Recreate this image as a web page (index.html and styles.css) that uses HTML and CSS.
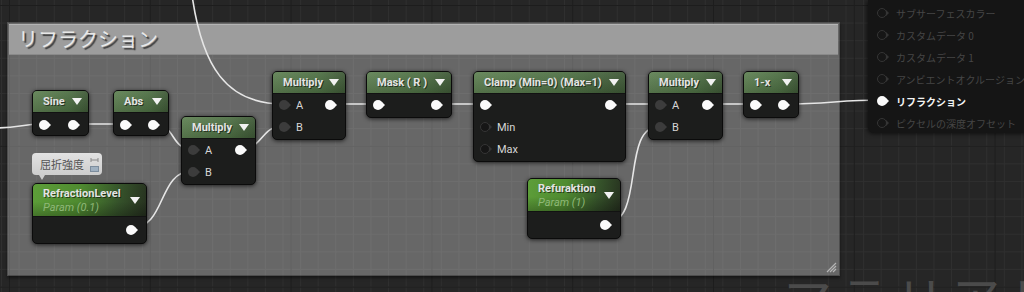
FILE: index.html
```html
<!DOCTYPE html>
<html lang="ja">
<head>
  <meta charset="UTF-8" />
  <title>Material Graph - Refraction</title>
  <link rel="stylesheet" href="styles.css">
</head>
<body>
  <div class="graph">
    <!-- comment box -->
    <div class="comment">
      <div class="comment-head">リフラクション</div>
      <svg class="comment-grip" width="12" height="12" viewBox="0 0 12 12">
        <path d="M11 2 L2 11 M11 5 L5 11 M11 8 L8 11" stroke="#b5b5b5" stroke-width="1.2" />
      </svg>
    </div>

    <!-- wires -->
    <svg class="wires" width="1024" height="292" viewBox="0 0 1024 292">
      <g fill="none" stroke="#e6e6e6" stroke-width="1.6">
        <path d="M-5,128 C20,128 20,124 43,124" />
        <path d="M75,124 L124,124" />
        <path d="M154,124 C176,124 170,149 192,149" />
        <path d="M132,228 C166,228 158,171 192,171" />
        <path d="M241,149 C263,149 261,126 283,126" />
        <path d="M192,-5 C202,66 226,104 283,104" />
        <path d="M332,104 L377,104" />
        <path d="M437,104 L485,104" />
        <path d="M611,104 L660,104" />
        <path d="M606,223 C646,223 620,126 660,126" />
        <path d="M709,104 L754,104" />
        <path d="M784,104 C830,104 838,100 882,100" />
      </g>
    </svg>

    <!-- Sine -->
    <div class="node n-sine">
      <div class="node-head"><span class="node-title">Sine</span><span class="caret"></span></div>
      <div class="node-body">
        <div class="row"><span class="pin on"></span><span class="pin on push"></span></div>
      </div>
    </div>

    <!-- Abs -->
    <div class="node n-abs">
      <div class="node-head"><span class="node-title">Abs</span><span class="caret"></span></div>
      <div class="node-body">
        <div class="row"><span class="pin on"></span><span class="pin on push"></span></div>
      </div>
    </div>

    <!-- Multiply (inner) -->
    <div class="node n-mul1">
      <div class="node-head"><span class="node-title">Multiply</span><span class="caret"></span></div>
      <div class="node-body">
        <div class="row"><span class="pin dim"></span><span class="label">A</span><span class="pin on push"></span></div>
        <div class="row"><span class="pin dim"></span><span class="label">B</span></div>
      </div>
    </div>

    <!-- Multiply (top) -->
    <div class="node n-mul2">
      <div class="node-head"><span class="node-title">Multiply</span><span class="caret"></span></div>
      <div class="node-body">
        <div class="row"><span class="pin dim"></span><span class="label">A</span><span class="pin on push"></span></div>
        <div class="row"><span class="pin dim"></span><span class="label">B</span></div>
      </div>
    </div>

    <!-- Mask -->
    <div class="node n-mask">
      <div class="node-head"><span class="node-title">Mask ( R )</span><span class="caret"></span></div>
      <div class="node-body">
        <div class="row"><span class="pin on"></span><span class="pin on push"></span></div>
      </div>
    </div>

    <!-- Clamp -->
    <div class="node n-clamp">
      <div class="node-head"><span class="node-title">Clamp (Min=0) (Max=1)</span><span class="caret"></span></div>
      <div class="node-body">
        <div class="row"><span class="pin on"></span><span class="pin on push"></span></div>
        <div class="row"><span class="pin hollow"></span><span class="label">Min</span></div>
        <div class="row"><span class="pin hollow"></span><span class="label">Max</span></div>
      </div>
    </div>

    <!-- Multiply (right) -->
    <div class="node n-mul3">
      <div class="node-head"><span class="node-title">Multiply</span><span class="caret"></span></div>
      <div class="node-body">
        <div class="row"><span class="pin dim"></span><span class="label">A</span><span class="pin on push"></span></div>
        <div class="row"><span class="pin dim"></span><span class="label">B</span></div>
      </div>
    </div>

    <!-- 1-x -->
    <div class="node n-onex">
      <div class="node-head"><span class="node-title">1-x</span><span class="caret"></span></div>
      <div class="node-body">
        <div class="row"><span class="pin on"></span><span class="pin on push"></span></div>
      </div>
    </div>

    <!-- comment bubble -->
    <div class="bubble">
      <span class="bubble-text">屈折強度</span>
      <span class="bubble-icons">
        <svg width="9" height="6" viewBox="0 0 9 6"><path d="M1 1 V5 M8 1 V5 M1 3 H8" stroke="#8a8a8a" stroke-width="1" fill="none" /></svg>
        <svg width="9" height="6" viewBox="0 0 9 6"><rect x="0.5" y="0.5" width="8" height="5" fill="#9fb0c0" stroke="#7d8d9d" stroke-width="1" /></svg>
      </span>
    </div>

    <!-- RefractionLevel param -->
    <div class="node param n-reflevel">
      <div class="node-head">
        <div class="param-text">
          <span class="node-title">RefractionLevel</span>
          <span class="param-sub">Param (0.1)</span>
        </div>
        <span class="caret"></span>
      </div>
      <div class="node-body">
        <div class="row tall"><span class="pin on push"></span></div>
      </div>
    </div>

    <!-- Refuraktion param -->
    <div class="node param n-refur">
      <div class="node-head">
        <div class="param-text">
          <span class="node-title">Refuraktion</span>
          <span class="param-sub">Param (1)</span>
        </div>
        <span class="caret"></span>
      </div>
      <div class="node-body">
        <div class="row tall"><span class="pin on push"></span></div>
      </div>
    </div>

    <!-- material result pins -->
    <div class="result">
      <div class="result-row"><span class="pin hollow"></span><span>サブサーフェスカラー</span></div>
      <div class="result-row"><span class="pin hollow"></span><span>カスタムデータ 0</span></div>
      <div class="result-row"><span class="pin hollow"></span><span>カスタムデータ 1</span></div>
      <div class="result-row"><span class="pin hollow"></span><span>アンビエントオクルージョン</span></div>
      <div class="result-row active"><span class="pin on"></span><span>リフラクション</span></div>
      <div class="result-row"><span class="pin hollow"></span><span>ピクセルの深度オフセット</span></div>
    </div>

    <div class="watermark">マテリアル</div>
  </div>
</body>
</html>
```

FILE: styles.css
```css
:root {
  --canvas: #262626;
  --grid: #2f2f2f;
  --grid-major: #1d1d1d;
  --node-body: #1c1d1c;
  --wire: #e6e6e6;
  --pin-dim: #3c3c3c;
  --text: #e4e4e4;
}

* {
  box-sizing: border-box;
  margin: 0;
  padding: 0;
}

body {
  font-family: Roboto, "Noto Sans CJK JP", sans-serif;
  background: var(--canvas);
  overflow: hidden;
}

/* canvas with grid */
.graph {
  position: relative;
  width: 1024px;
  height: 292px;
  overflow: hidden;
  background-color: var(--canvas);
  background-image:
    linear-gradient(to right, var(--grid-major) 1px, transparent 1px),
    linear-gradient(to bottom, var(--grid-major) 1px, transparent 1px),
    linear-gradient(to right, var(--grid) 1px, transparent 1px),
    linear-gradient(to bottom, var(--grid) 1px, transparent 1px);
  background-size: 140.8px 140.8px, 140.8px 140.8px, 17.6px 17.6px, 17.6px 17.6px;
  background-position: 9px 5px, 9px 5px, 1px 5px, 1px 5px;
}

/* comment box */
.comment {
  position: absolute;
  left: 7px;
  top: 22px;
  width: 833px;
  height: 254px;
  background: rgba(255, 255, 255, 0.3);
  border: 1px solid rgba(0, 0, 0, 0.25);
  box-shadow: 0 2px 3px rgba(0, 0, 0, 0.45);
  z-index: 0;
}

.comment-head {
  margin: 1px 1px 0;
  height: 31px;
  background: #9d9d9d;
  border-top: 1px solid #b4b4b4;
  border-bottom: 1px solid #8a8a8a;
  font-family: "Noto Sans CJK JP", sans-serif;
  font-size: 20px;
  line-height: 28px;
  padding-left: 9px;
  color: #e8e8e8;
  text-shadow: 2px 2px 1px #3c3c3c;
}

.comment-grip {
  position: absolute;
  right: 2px;
  bottom: 2px;
}

.wires {
  position: absolute;
  left: 0;
  top: 0;
  z-index: 1;
}

/* nodes */
.node {
  position: absolute;
  z-index: 2;
  background: var(--node-body);
  border: 1px solid #0b0b0b;
  border-radius: 5px;
  box-shadow: 0 1px 4px rgba(0, 0, 0, 0.7);
  overflow: visible;
}

.node-head {
  height: 22px;
  display: flex;
  align-items: center;
  padding: 0 6px 0 10px;
  border-radius: 4px 4px 0 0;
  border-bottom: 1px solid #121212;
  background:
    linear-gradient(to bottom, rgba(255, 255, 255, 0.07), rgba(0, 0, 0, 0.12)),
    linear-gradient(to right, #5f8153, #4d6f43 65%, #3e5836);
}

.node-title {
  font-size: 11px;
  font-weight: bold;
  color: var(--text);
  text-shadow: 1px 1px 0 rgba(0, 0, 0, 0.55);
  white-space: nowrap;
}

.caret {
  margin-left: auto;
  width: 0;
  height: 0;
  border-left: 5px solid transparent;
  border-right: 5px solid transparent;
  border-top: 7px solid #f2f2f2;
}

.node-body {
  padding-bottom: 1px;
}

.row {
  height: 22px;
  display: flex;
  align-items: center;
  padding: 0 10px 0 6px;
}

.row.tall {
  height: 25px;
}

.label {
  margin-left: 7px;
  font-size: 11px;
  color: #d6d6d6;
}

/* pins */
.pin {
  position: relative;
  flex: none;
  width: 10px;
  height: 10px;
  border-radius: 50%;
}

.pin::after {
  content: '';
  position: absolute;
  left: 9px;
  top: 2px;
  border-top: 3px solid transparent;
  border-bottom: 3px solid transparent;
  border-left: 3px solid transparent;
}

.pin.on { background: #fafafa; }
.pin.on::after { border-left-color: #fafafa; }

.pin.dim { background: var(--pin-dim); }
.pin.dim::after { border-left-color: var(--pin-dim); }

.pin.hollow {
  background: #161616;
  border: 1.5px solid #353535;
}
.pin.hollow::after {
  left: 8px;
  top: 0.5px;
  border-left-color: #353535;
}

.push { margin-left: auto; }

.n-sine  { left: 32px;  top: 90px;  width: 57px; }
.n-abs   { left: 113px; top: 90px;  width: 56px; }
.n-sine .row, .n-abs .row { height: 21px; padding-top: 2px; }
.n-mul1  { left: 181px; top: 116px; width: 75px; }
.n-mul2  { left: 272px; top: 71px;  width: 74px; }
.n-mask  { left: 366px; top: 71px;  width: 86px; }
.n-clamp { left: 473px; top: 71px;  width: 153px; }
.n-mul3  { left: 648px; top: 71px;  width: 75px; }
.n-onex  { left: 743px; top: 71px;  width: 56px; }

/* parameter nodes */
.param .node-head {
  height: 33px;
  align-items: center;
  background:
    linear-gradient(to bottom, rgba(0, 0, 0, 0) 55%, rgba(0, 0, 0, 0.25)),
    linear-gradient(100deg, #5d9e39 0%, #4f8b30 40%, #35522a 75%, #26301f 100%);
}

.param-text {
  display: flex;
  flex-direction: column;
  line-height: 14px;
  padding-top: 1px;
}

.param-sub {
  font-size: 11px;
  font-style: italic;
  color: #8fb878;
}

.n-reflevel { left: 32px;  top: 183px; width: 115px; }
.n-refur    { left: 527px; top: 178px; width: 94px; }

/* comment bubble above a node */
.bubble {
  position: absolute;
  z-index: 2;
  left: 32px;
  top: 153px;
  width: 70px;
  height: 22px;
  display: flex;
  align-items: center;
  padding: 0 3px 0 8px;
  border-radius: 4px;
  background: linear-gradient(to bottom, #e2e2e2, #cdcdcd);
  font-family: "Noto Sans CJK JP", sans-serif;
  font-size: 11px;
  color: #555;
}

.bubble::after {
  content: '';
  position: absolute;
  left: 7px;
  bottom: -5px;
  border-left: 3px solid transparent;
  border-right: 3px solid transparent;
  border-top: 5px solid #cdcdcd;
}

.bubble-icons {
  margin-left: auto;
  display: flex;
  flex-direction: column;
  gap: 3px;
}

/* material result panel */
.result {
  position: absolute;
  z-index: 3;
  left: 868px;
  top: 0;
  width: 160px;
  height: 133px;
  padding-top: 2px;
  background: #151515;
  border-radius: 0 0 0 6px;
  box-shadow: -1px 1px 4px rgba(0, 0, 0, 0.6);
}

.result-row {
  height: 22px;
  display: flex;
  align-items: center;
  padding-left: 9px;
  font-family: "Noto Sans CJK JP", sans-serif;
  font-size: 10px;
  color: #464646;
  white-space: nowrap;
}

.result-row span:last-child {
  margin-left: 9px;
}

.result-row.active {
  color: #f4f4f4;
  font-weight: bold;
}

.watermark {
  position: absolute;
  z-index: 0;
  left: 784px;
  top: 272px;
  font-family: "Noto Sans CJK JP", sans-serif;
  font-size: 48px;
  line-height: 48px;
  letter-spacing: 8px;
  color: #4b4b4b;
  white-space: nowrap;
}
```
